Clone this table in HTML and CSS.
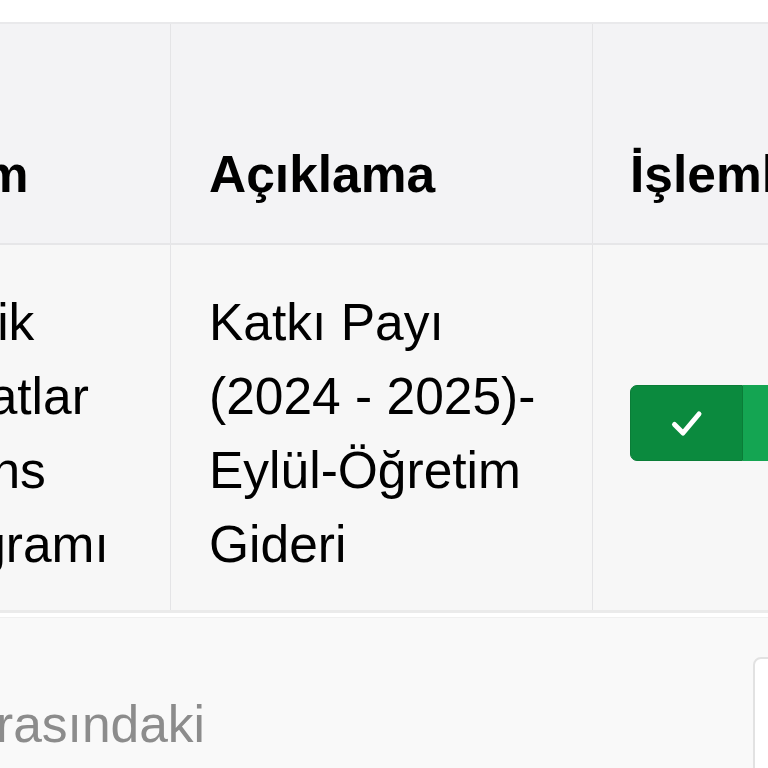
FILE: index.html
```html
<!DOCTYPE html>
<html lang="tr">
<head>
<meta charset="utf-8">
<link rel="stylesheet" href="styles.css">
</head>
<body>
<div class="top-band"></div>
<div class="table-wrap">
  <table class="fees">
    <thead>
      <tr>
        <th class="c1">Birim</th>
        <th class="c2">Açıklama</th>
        <th class="c3">İşlemler</th>
      </tr>
    </thead>
    <tbody>
      <tr>
        <td class="c1">Grafik Sanatlar Lisans Programı</td>
        <td class="c2">Katkı Payı (2024 - 2025)-<br>Eylül-Öğretim Gideri</td>
        <td class="c3">
          <div class="btn-group">
            <button class="btn btn-ok" type="button">
              <svg width="40" height="40" viewBox="0 0 40 40"><path d="M7.5 21.5 L16 30 L32 11" fill="none" stroke="#fff" stroke-width="5" stroke-linecap="round" stroke-linejoin="round"/></svg>
            </button>
            <button class="btn btn-more" type="button"></button>
          </div>
        </td>
      </tr>
    </tbody>
  </table>
</div>
<div class="footer-panel">
  <div class="note-wrap"><p class="note">Kayıt dönemi arasındaki</p></div>
  <div class="select-box"></div>
</div>
</body>
</html>
```
FILE: styles.css
```css
html, body {
  margin: 0;
  padding: 0;
  background: #ffffff;
  overflow: hidden;
  width: 768px;
  height: 768px;
}
body {
  font-family: "Liberation Sans", Arial, Helvetica, sans-serif;
  color: #000;
}
.top-band {
  height: 22px;
  background: #ffffff;
}
.table-wrap {
  width: 768px;
  overflow: hidden;
}
.fees {
  border-collapse: collapse;
  margin-left: -141px;
  table-layout: fixed;
  width: 1100px;
  font-size: 51.5px;
  line-height: 74px;
}
.fees th, .fees td {
  text-align: left;
  padding: 0 36px 0 38px;
  border-left: 1px solid #e4e4e6;
}
.fees .c1 { width: 237px; border-left: none; }
.fees .c2 { width: 347px; }
.fees .c3 { width: 400px; padding-left: 37px; }
.fees thead tr {
  background: #f3f3f5;
  border-top: 2px solid #e9e9eb;
  border-bottom: 2px solid #e6e6e8;
}
.fees th {
  height: 187px;
  vertical-align: bottom;
  padding-bottom: 32px;
  font-weight: bold;
}
.fees tbody tr {
  background: #f7f7f7;
  border-bottom: 3px solid #ebebeb;
}
.fees td {
  height: 296px;
  padding-top: 40px;
  padding-bottom: 29px;
  vertical-align: middle;
}
.btn-group {
  display: flex;
  height: 76px;
  margin-bottom: 20px;
}
.btn {
  border: none;
  margin: 0;
  padding: 0;
  height: 76px;
  display: flex;
  align-items: center;
  justify-content: center;
}
.btn-ok {
  width: 113px;
  background: #0b8a3e;
  border-radius: 7px 0 0 7px;
  border: 1px solid #0a7d37;
}
.btn-more {
  width: 120px;
  background: #14a552;
}
.footer-panel {
  margin-top: 4px;
  background: #f9f9f9;
  border-top: 1px solid #f0f0f0;
  height: 200px;
  display: flex;
  position: relative;
}
.note-wrap {
  width: 205px;
  display: flex;
  justify-content: flex-end;
}
.note {
  margin: 69px 0 0 0;
  font-size: 51.5px;
  line-height: 74px;
  color: #8c8c8c;
  white-space: nowrap;
}
.select-box {
  position: absolute;
  left: 753px;
  top: 39px;
  width: 100px;
  height: 200px;
  background: #fff;
  border: 2px solid #e2e2e2;
  border-radius: 8px;
}
```
